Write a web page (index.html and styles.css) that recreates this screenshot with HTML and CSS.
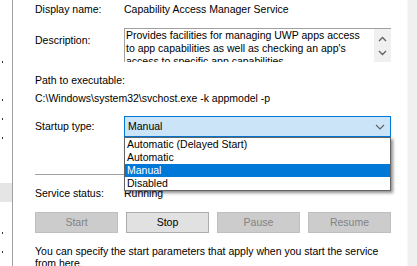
FILE: index.html
```html
<!DOCTYPE html>
<html lang="en">
  <head>
    <title>Capability Access Manager Service Properties</title>
    <link rel="stylesheet" href="styles.css">
  </head>
  <body>
    <div class="window">
      <div class="side-list">
        <div class="side-row"><span class="dot"></span></div>
        <div class="side-row"></div>
        <div class="side-row"><span class="dot"></span></div>
        <div class="side-row"><span class="dot"></span></div>
        <div class="side-row"><span class="dot"></span></div>
        <div class="side-row"></div>
        <div class="side-row"></div>
        <div class="side-row side-row-selected"></div>
        <div class="side-row"></div>
        <div class="side-row"><span class="dot"></span></div>
        <div class="side-row"><span class="dot"></span></div>
      </div>

      <main class="panel">
        <div class="field field-name">
          <span class="label">Display name:</span>
          <span class="value">Capability Access Manager Service</span>
        </div>

        <div class="field field-desc">
          <span class="label">Description:</span>
          <div class="textbox">
            <div class="textbox-text">
              Provides facilities for managing UWP apps access<br>
              to app capabilities as well as checking an app's<br>
              access to specific app capabilities
            </div>
            <div class="scrollbar">
              <svg width="9" height="6" viewBox="0 0 9 6"><path d="M1 5 L4.5 1.5 L8 5" fill="none" stroke="#606060" stroke-width="1.3"/></svg>
              <svg width="9" height="6" viewBox="0 0 9 6"><path d="M1 1 L4.5 4.5 L8 1" fill="none" stroke="#606060" stroke-width="1.3"/></svg>
            </div>
          </div>
        </div>

        <div class="path-label">Path to executable:</div>
        <div class="path-value">C:\Windows\system32\svchost.exe -k appmodel -p</div>

        <div class="field field-startup">
          <span class="label">Startup type:</span>
          <div class="combo">
            <div class="combo-box">
              <span>Manual</span>
              <svg class="combo-arrow" width="10" height="6" viewBox="0 0 10 6"><path d="M1 1 L5 5 L9 1" fill="none" stroke="#606060" stroke-width="1.1"/></svg>
            </div>
            <ul class="combo-list">
              <li>Automatic (Delayed Start)</li>
              <li>Automatic</li>
              <li class="selected">Manual</li>
              <li>Disabled</li>
            </ul>
          </div>
        </div>

        <hr class="separator">

        <div class="field field-status">
          <span class="label">Service status:</span>
          <span class="value">Running</span>
        </div>

        <div class="buttons">
          <button class="btn" disabled>Start</button>
          <button class="btn">Stop</button>
          <button class="btn" disabled>Pause</button>
          <button class="btn" disabled>Resume</button>
        </div>

        <p class="hint">You can specify the start parameters that apply when you start the service<br>from here.</p>
      </main>

      <div class="right-strip"></div>
    </div>
  </body>
</html>
```

FILE: styles.css
```css
html {
  font-family: "Liberation Sans", Arial, sans-serif;
  font-size: 10.5px;
}

body {
  margin: 0;
  background: #fff;
  color: #000;
  overflow: hidden;
}

.window {
  display: flex;
  height: 266px;
  overflow: hidden;
}

/* list pane cut off on the left */
.side-list {
  width: 12px;
  flex: none;
  border-right: 1px solid #a0a0a0;
  padding-top: 50px;
}

.side-row {
  height: 19px;
  position: relative;
}

.side-row-selected {
  background: #e5e5e5;
}

.dot {
  position: absolute;
  left: 2px;
  top: 11px;
  width: 1px;
  height: 2px;
  background: #333;
}

.panel {
  flex: 1;
  padding: 0 16px 0 22px;
  line-height: 13px;
}

.right-strip {
  width: 9px;
  flex: none;
  background: #f0f0f0;
  border-left: 1px solid #f7f7f7;
}

.field {
  display: grid;
  grid-template-columns: 89px 1fr;
  white-space: nowrap;
}

.field-name {
  margin-top: 3px;
}

.field-desc {
  margin-top: 12px;
}

.field-desc .label {
  padding-top: 6px;
}

.textbox {
  display: flex;
  height: 33px;
  border-top: 1px solid #a0a0a0;
  border-left: 1px solid #a0a0a0;
  overflow: hidden;
}

.textbox-text {
  flex: 1;
  padding-left: 1px;
  white-space: nowrap;
  overflow: hidden;
}

.scrollbar {
  width: 17px;
  flex: none;
  background: #f0f0f0;
  display: flex;
  flex-direction: column;
  align-items: center;
  justify-content: space-between;
  padding: 7px 0 6px;
}

.scrollbar svg {
  display: block;
}

.path-label {
  margin-top: 12px;
}

.path-value {
  margin-top: 5px;
  white-space: nowrap;
}

.field-startup {
  margin-top: 11px;
  align-items: center;
}

.combo {
  position: relative;
}

.combo-box {
  height: 19px;
  border: 1px solid #0078d7;
  background: #cce4f7;
  display: flex;
  align-items: center;
  justify-content: space-between;
  padding: 0 5px 0 3px;
}

.combo-arrow {
  display: block;
}

.combo-list {
  position: absolute;
  top: 100%;
  left: 0;
  right: 0;
  margin: 0;
  padding: 0;
  list-style: none;
  background: #fff;
  border: 1px solid #646464;
  box-shadow: 2px 2px 3px rgba(0, 0, 0, 0.45);
  z-index: 2;
}

.combo-list li {
  height: 13px;
  padding-left: 2px;
}

.combo-list .selected {
  background: #0078d7;
  color: #fff;
}

.separator {
  margin: 37px 0 0;
  border: 0;
  border-top: 1px solid #a0a0a0;
}

.field-status {
  margin-top: 12px;
}

.buttons {
  display: grid;
  grid-template-columns: repeat(4, 1fr);
  column-gap: 8px;
  margin-top: 12px;
}

.btn {
  height: 21px;
  margin: 0;
  padding: 0;
  font: inherit;
  color: #000;
  background: #e1e1e1;
  border: 1px solid #adadad;
}

.btn:disabled {
  color: #838383;
  background: #cccccc;
  border-color: #bfbfbf;
}

.hint {
  margin: 12px 0 0;
  line-height: 12px;
  white-space: nowrap;
}
```
